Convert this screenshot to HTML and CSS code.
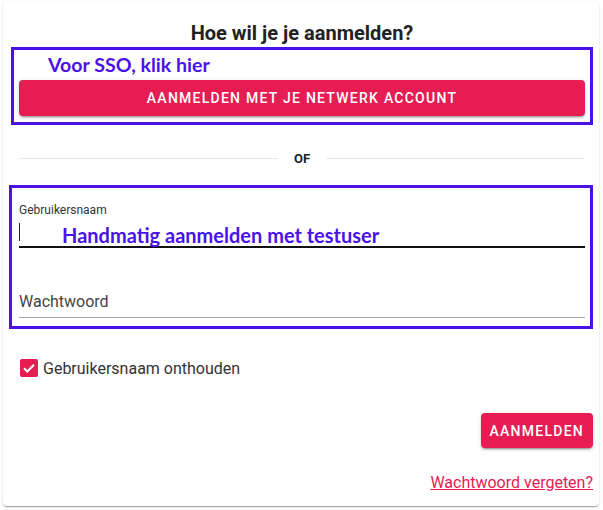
FILE: index.html
```html
<!DOCTYPE html>
<html lang="nl">
<head>
<meta charset="utf-8">
<link rel="stylesheet" href="styles.css">
</head>
<body>
<div class="card">
  <h1 class="title">Hoe wil je je aanmelden?</h1>
  <div class="note-box sso">
    <div class="note">Voor SSO, klik hier</div>
    <button class="btn btn-wide">AANMELDEN MET JE NETWERK ACCOUNT</button>
  </div>
  <div class="divider"><span class="line"></span><span class="or">OF</span><span class="line"></span></div>
  <div class="note-box fields">
    <div class="field field-active">
      <label class="small-label">Gebruikersnaam</label>
      <div class="input-row"><span class="caret"></span><span class="note note-input">Handmatig aanmelden met testuser</span></div>
    </div>
    <div class="field field-pw">
      <div class="placeholder">Wachtwoord</div>
    </div>
  </div>
  <label class="check-row">
    <span class="checkbox"><svg viewBox="0 0 18 18" width="18" height="18"><path d="M4 9.2l3.3 3.3L14 5.8" fill="none" stroke="#fff" stroke-width="2"/></svg></span>
    <span class="check-text">Gebruikersnaam onthouden</span>
  </label>
  <div class="actions"><button class="btn btn-small">AANMELDEN</button></div>
  <div class="link-row"><a class="link" href="#">Wachtwoord vergeten?</a></div>
</div>
</body>
</html>
```
FILE: styles.css
```css
html, body { margin: 0; padding: 0; background: #fff; }
body { padding: 2px 4px 3px 3px; font-family: Roboto, "Liberation Sans", sans-serif; color: #222; }
.card {
  box-sizing: border-box;
  width: 596px;
  height: 504px;
  background: #fff;
  border-radius: 4px;
  box-shadow: 0 2px 1px -1px rgba(0,0,0,.2), 0 1px 1px 0 rgba(0,0,0,.14), 0 1px 3px 0 rgba(0,0,0,.12);
  padding: 19px 14px 0 16px;
}
.title {
  margin: 0;
  text-align: center;
  font-size: 20px;
  line-height: 24px;
  font-weight: 700;
  color: #222;
}
.note-box {
  border: 3px solid #4a12e8;
  margin: 2px -8px 0 -8px;
  padding: 0 5px;
}
.note {
  font-family: Lato, "Open Sans", sans-serif;
  font-weight: 700;
  color: #4a12e8;
  font-size: 19.6px;
}
.sso .note { line-height: 28px; padding: 1px 0 1px 29px; }
.btn {
  font-family: Roboto, sans-serif;
  font-weight: 500;
  font-size: 14px;
  letter-spacing: 1.25px;
  color: #fff;
  background: #e61c52;
  border: 0;
  border-radius: 4px;
  box-shadow: 0 3px 1px -2px rgba(0,0,0,.2), 0 2px 2px 0 rgba(0,0,0,.14), 0 1px 5px 0 rgba(0,0,0,.12);
}
.btn-wide { display: block; width: 100%; height: 36px; margin-bottom: 6px; }
.divider { display: flex; align-items: center; gap: 16px; margin-top: 24px; height: 18px; }
.line { flex: 1; height: 1px; background: #e8e8e8; }
.or { font-size: 13px; font-weight: 700; color: #222; }
.fields { margin-top: 18px; padding: 15px 5px 8px; margin-left: -10px; }
.field { padding-left: 2px; }
.small-label { display: block; font-size: 12px; line-height: 14px; color: #333; }
.input-row { display: flex; align-items: center; height: 23px; margin-top: 6px; border-bottom: 2px solid #111; }
.caret { align-self: flex-start; width: 1px; height: 18px; background: #222; margin-right: 42px; }
.note-input { font-size: 20px; }
.field-pw { padding-top: 44px; }
.placeholder { font-size: 16px; color: #444; line-height: 20px; padding-bottom: 5px; border-bottom: 1px solid #aaa; }
.check-row { display: flex; align-items: center; margin-top: 29px; margin-left: 1px; height: 20px; cursor: pointer; }
.checkbox { width: 18px; height: 18px; border-radius: 2px; background: #e61c52; display: flex; margin-right: 5px; }
.check-text { font-size: 16px; color: #333; }
.actions { display: flex; justify-content: flex-end; margin-top: 35px; margin-right: -8px; }
.btn-small { height: 35px; padding: 0 9px; }
.link-row { display: flex; justify-content: flex-end; margin-top: 25px; margin-right: -8px; }
.link { font-size: 16px; color: #e61c52; text-decoration: underline; }
```
